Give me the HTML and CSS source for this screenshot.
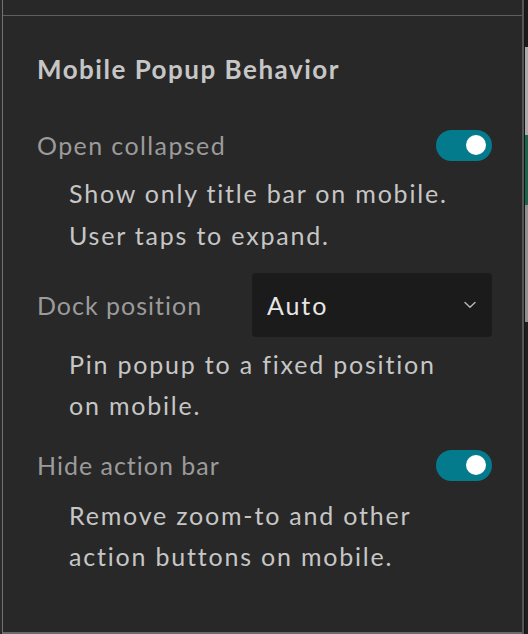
FILE: index.html
```html
<!DOCTYPE html>
<html lang="en">
<head>
<meta charset="utf-8">
<title>Mobile Popup Behavior</title>
<link rel="stylesheet" href="styles.css">
</head>
<body>
<div class="frame">
  <div class="edge-left"></div>
  <div class="panel">
    <div class="prev"></div>
    <section class="section">
      <h2 class="title">Mobile Popup Behavior</h2>

      <div class="row row-first">
        <span class="label label-open">Open collapsed</span>
        <span class="toggle" role="switch" aria-checked="true"><span class="knob"></span></span>
      </div>
      <p class="desc desc-first">Show only title bar on mobile.<br>User taps to expand.</p>

      <div class="row row-select">
        <span class="label">Dock position</span>
        <div class="select">
          <span class="select-value">Auto</span>
          <svg class="chevron" width="14" height="8" viewBox="0 0 14 8" aria-hidden="true"><path d="M2 1.5 L7 6.2 L12 1.5" fill="none" stroke="#b8b8b8" stroke-width="1.4" stroke-linecap="round" stroke-linejoin="round"/></svg>
        </div>
      </div>
      <p class="desc desc-second">Pin popup to a fixed position<br>on mobile.</p>

      <div class="row row-third">
        <span class="label">Hide action bar</span>
        <span class="toggle" role="switch" aria-checked="true"><span class="knob"></span></span>
      </div>
      <p class="desc desc-third">Remove zoom-to and other<br>action buttons on mobile.</p>
    </section>
  </div>
  <div class="edge-right">
    <div class="er-dark"></div>
    <div class="er-gray"></div>
    <div class="er-green"></div>
    <div class="er-gray2"></div>
    <div class="er-dark2"></div>
  </div>
</div>
</body>
</html>
```

FILE: styles.css
```css
* { box-sizing: border-box; }

html, body {
  margin: 0;
  padding: 0;
  background: #1c1c1c;
}

body {
  font-family: "Lato", "Noto Sans", sans-serif;
  -webkit-font-smoothing: antialiased;
}

.frame {
  display: flex;
  width: 528px;
  height: 634px;
  overflow: hidden;
}

.edge-left {
  width: 2px;
  background: #2a2a2a;
}

.panel {
  width: 522px;
  display: flex;
  flex-direction: column;
  background: #282828;
  border-left: 1px solid #727272;
  border-right: 2px solid #555555;
}

.prev {
  height: 15px;
  flex: none;
}

.section {
  flex: 1;
  border-top: 1px solid #5e5e5e;
  border-bottom: 2px solid #6a6a6a;
  padding: 37px 30px 0 34px;
}

.title {
  margin: 0 0 43px;
  font-size: 26px;
  line-height: 33px;
  font-weight: 700;
  color: #c6c6c6;
  letter-spacing: 1.5px;
}

.row {
  display: flex;
  align-items: center;
  justify-content: space-between;
}

.label {
  font-size: 25px;
  line-height: 32px;
  color: #9b9b9b;
  letter-spacing: 1px;
}

.label-open { letter-spacing: 1.4px; }

.toggle {
  position: relative;
  width: 56px;
  height: 31px;
  border-radius: 16px;
  background: #047b8d;
  display: flex;
  align-items: center;
  justify-content: flex-end;
  padding-right: 6px;
}

.knob {
  width: 20px;
  height: 20px;
  border-radius: 50%;
  background: #ffffff;
}

.desc {
  margin: 0;
  padding-left: 32px;
  font-size: 25px;
  color: #c6c6c6;
  letter-spacing: 1.8px;
}

.desc-first { margin-top: 11px; line-height: 42px; }

.row-select { margin-top: 17px; }

.select {
  width: 240px;
  height: 64px;
  background: #1b1b1b;
  border-radius: 4px;
  display: flex;
  align-items: center;
  justify-content: space-between;
  padding: 0 15px 0 15px;
}

.select-value {
  font-size: 25px;
  color: #e6e6e6;
  letter-spacing: 1.9px;
}

.chevron { display: block; }

.desc-second { margin-top: 7px; line-height: 41px; }

.row-third { margin-top: 23px; }

.desc-third { margin-top: 14px; line-height: 41px; }

.edge-right {
  width: 4px;
  display: flex;
  flex-direction: column;
  border-left: 1px solid #141414;
}

.er-dark { height: 47px; background: #1a1a1a; }
.er-gray { height: 88px; background: #a9a9a9; }
.er-green { height: 70px; background: #17654b; }
.er-gray2 { height: 117px; background: #8f8f8f; }
.er-dark2 { flex: 1; background: #1e1e1e; }
```
